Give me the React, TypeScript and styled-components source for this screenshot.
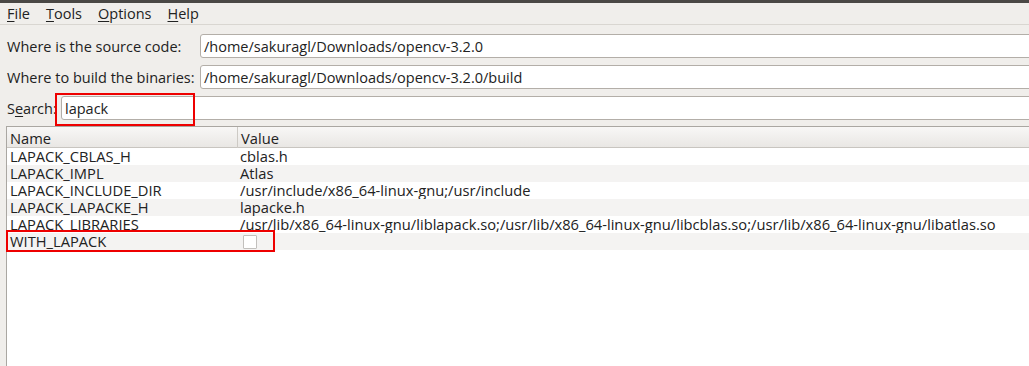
import React from "react";
import styled, { createGlobalStyle } from "styled-components";

const Global = createGlobalStyle`
  html, body { margin: 0; padding: 0; }
  body {
    width: 1029px;
    height: 366px;
    overflow: hidden;
    background: #f0eeeb;
    font-family: "Open Sans", "Noto Sans", "DejaVu Sans", sans-serif;
    color: #222222;
  }
`;

const Window = styled.div`
  display: flex;
  flex-direction: column;
  width: 1029px;
  height: 366px;
  overflow: hidden;
  background: #f0eeeb;
`;

const TitleStrip = styled.div`
  height: 3px;
  background: #4a4845;
  flex: none;
`;

const MenuBar = styled.div`
  display: flex;
  align-items: center;
  height: 21px;
  padding-left: 7px;
  gap: 16px;
  border-bottom: 1px solid #d9d6d1;
  font-size: 14.5px;
  flex: none;
`;

const MenuItem = styled.span`
  line-height: 21px;
  u { text-decoration-thickness: 1px; text-underline-offset: 2px; }
`;

const Form = styled.div`
  display: flex;
  flex-direction: column;
  gap: 7px;
  padding-top: 9px;
  flex: none;
`;

const FormRow = styled.div`
  display: flex;
  align-items: center;
  height: 24px;
`;

const Label = styled.div<{ $width: number }>`
  width: ${(p) => p.$width}px;
  padding-left: 7px;
  box-sizing: border-box;
  font-size: 14.5px;
  flex: none;
  white-space: nowrap;
  u { text-decoration-thickness: 1px; text-underline-offset: 2px; }
`;

const FieldWrap = styled.div`
  position: relative;
  flex: 1;
  margin-right: -10px;
  height: 24px;
`;

const Field = styled.div`
  height: 24px;
  box-sizing: border-box;
  border: 1px solid #b3aea8;
  border-radius: 3px;
  background: #ffffff;
  padding-left: 3px;
  display: flex;
  align-items: center;
  font-size: 14.5px;
  white-space: nowrap;
`;

const Highlight = styled.div<{ $top: number; $left: number; $w: number; $h: number }>`
  position: absolute;
  top: ${(p) => p.$top}px;
  left: ${(p) => p.$left}px;
  width: ${(p) => p.$w}px;
  height: ${(p) => p.$h}px;
  box-sizing: border-box;
  border: 2px solid #ee0000;
  pointer-events: none;
`;

const Table = styled.div`
  margin-top: 6px;
  margin-left: 6px;
  flex: 1;
  background: #ffffff;
  border-left: 1px solid #aaa7a2;
  border-top: 1px solid #aaa7a2;
  display: flex;
  flex-direction: column;
  font-size: 14.7px;
`;

const HeaderRow = styled.div`
  display: grid;
  grid-template-columns: 230px 1fr;
  height: 20px;
  background: linear-gradient(#f8f7f6, #e9e7e4);
  border-bottom: 1px solid #c8c5c0;
`;

const HeaderCell = styled.div<{ $divider?: boolean }>`
  display: flex;
  align-items: center;
  padding-left: 3px;
  padding-top: 1px;
  border-left: ${(p) => (p.$divider ? "1px solid #cdcac5" : "none")};
`;

const Row = styled.div<{ $alt: boolean }>`
  position: relative;
  display: grid;
  grid-template-columns: 230px 1fr;
  height: 17px;
  background: ${(p) => (p.$alt ? "#f4f3f2" : "#ffffff")};
`;

const Cell = styled.div`
  display: flex;
  align-items: center;
  padding-left: 3px;
  white-space: nowrap;
  line-height: 17px;
`;

const CheckBox = styled.span`
  display: inline-block;
  width: 14px;
  height: 14px;
  box-sizing: border-box;
  margin-left: 3px;
  border: 1px solid #c2c0bd;
  border-radius: 1px;
  background: #ffffff;
`;

const rows: { name: string; value: string | null }[] = [
  { name: "LAPACK_CBLAS_H", value: "cblas.h" },
  { name: "LAPACK_IMPL", value: "Atlas" },
  { name: "LAPACK_INCLUDE_DIR", value: "/usr/include/x86_64-linux-gnu;/usr/include" },
  { name: "LAPACK_LAPACKE_H", value: "lapacke.h" },
  {
    name: "LAPACK_LIBRARIES",
    value:
      "/usr/lib/x86_64-linux-gnu/liblapack.so;/usr/lib/x86_64-linux-gnu/libcblas.so;/usr/lib/x86_64-linux-gnu/libatlas.so",
  },
  { name: "WITH_LAPACK", value: null },
];

export default function App() {
  return (
    <>
      <Global />
      <Window>
        <TitleStrip />
        <MenuBar>
          <MenuItem><u>F</u>ile</MenuItem>
          <MenuItem><u>T</u>ools</MenuItem>
          <MenuItem><u>O</u>ptions</MenuItem>
          <MenuItem><u>H</u>elp</MenuItem>
        </MenuBar>
        <Form>
          <FormRow>
            <Label $width={200}>Where is the source code:</Label>
            <FieldWrap>
              <Field>/home/sakuragl/Downloads/opencv-3.2.0</Field>
            </FieldWrap>
          </FormRow>
          <FormRow>
            <Label $width={200}>Where to build the binaries:</Label>
            <FieldWrap>
              <Field>/home/sakuragl/Downloads/opencv-3.2.0/build</Field>
            </FieldWrap>
          </FormRow>
          <FormRow>
            <Label $width={61}>S<u>e</u>arch:</Label>
            <FieldWrap>
              <Field>lapack</Field>
              <Highlight $top={-3} $left={-6} $w={140} $h={33} />
            </FieldWrap>
          </FormRow>
        </Form>
        <Table>
          <HeaderRow>
            <HeaderCell>Name</HeaderCell>
            <HeaderCell $divider>Value</HeaderCell>
          </HeaderRow>
          {rows.map((r, i) => (
            <Row key={r.name} $alt={i % 2 === 1}>
              <Cell>{r.name}</Cell>
              <Cell>{r.value === null ? <CheckBox /> : r.value}</Cell>
              {r.value === null && <Highlight $top={-3} $left={-1} $w={269} $h={22} />}
            </Row>
          ))}
        </Table>
      </Window>
    </>
  );
}
